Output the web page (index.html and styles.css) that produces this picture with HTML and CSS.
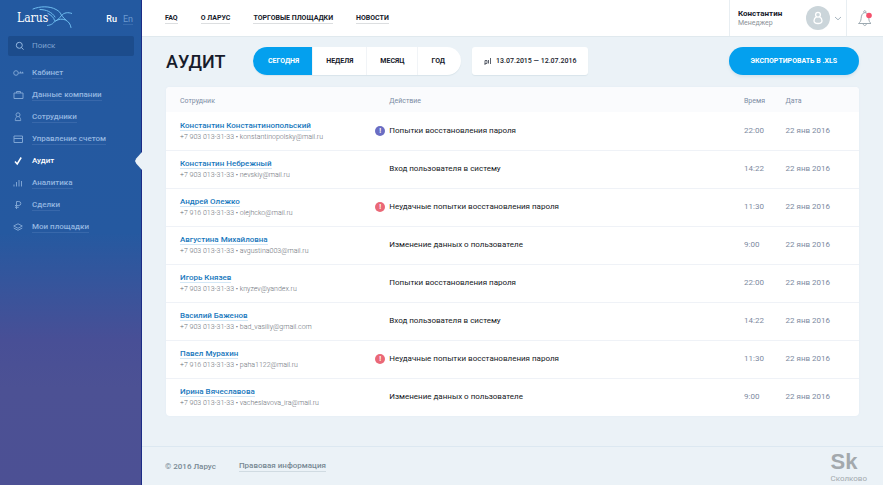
FILE: index.html
```html
<!DOCTYPE html>
<html lang="ru">
<head>
<meta charset="utf-8">
<meta name="viewport" content="width=device-width, initial-scale=1">
<title>Ларус — Аудит</title>
<link rel="stylesheet" href="styles.css">
</head>
<body>
<div class="app">
  <aside class="sidebar">
    <div class="brand">
      <a class="logo" href="#">
        <span class="logo-text">Larus</span>
        <svg class="logo-bird" viewBox="0 0 40 22" fill="none" stroke="#6fbdf0" stroke-linecap="round" stroke-linejoin="round" aria-hidden="true">
          <path d="M1 3C8 0 18 0 24 3.500c3 1.500 5 3.500 5.500 6"/>
          <path d="M8 3.500c6 0 12 2.500 15 7.500"/>
          <path d="M40 7.500c-4-1.500-8-1-10.500 2-2 2.500-3.500 4.500-6 5.500"/>
          <path d="M16 7.500c3 1.500 6 4 6.500 7 0 2.500-3 4.500-7 5"/>
          <path d="M23.500 15c3-2 7-2.500 10-1 3 1.500 5 4 5.500 7.500M30 9.500c1 2 2.500 3.500 4 4.500"/>
        </svg>
      </a>
      <div class="langs"><a class="lang active" href="#">Ru</a><a class="lang" href="#">En</a></div>
    </div>
    <form class="search">
      <svg class="search-icon" viewBox="0 0 10 10" fill="none" stroke="currentColor" aria-hidden="true"><circle cx="4.3" cy="4.3" r="3"/><path d="M6.5 6.5 8.5 8.7"/></svg>
      <input type="search" placeholder="Поиск" aria-label="Поиск">
    </form>
    <nav class="menu" aria-label="Разделы">
      <a href="#"><svg viewBox="0 0 12 12"><circle cx="4" cy="6" r="2.3"/><path d="M6.500 6h5M8.500 6V4.500M10.500 6V4.800"/></svg><span>Кабинет</span></a>
      <a href="#"><svg viewBox="0 0 12 12"><path d="M2 4h9v5.500H2zM4.500 4V2.500h4V4"/></svg><span>Данные компании</span></a>
      <a href="#"><svg viewBox="0 0 12 12"><circle cx="6" cy="3.800" r="2"/><path d="M4.800 5.800C3.600 6.600 3.300 8 3.300 9.600h5.400c0-1.600-.3-3-1.500-3.800"/></svg><span>Сотрудники</span></a>
      <a href="#"><svg viewBox="0 0 12 12"><path d="M2 3h8.500v6.500H2zM2 5.500h8.500"/></svg><span>Управление счетом</span></a>
      <a class="current" href="#" aria-current="page"><svg viewBox="0 0 12 12"><path d="M3 6.500 5.200 9l4-6.500"/></svg><span>Аудит</span></a>
      <a href="#"><svg viewBox="0 0 12 12"><path d="M2 9.500V7.500M4.500 9.500V5M7 9.500V3M9.500 9.500V4"/></svg><span>Аналитика</span></a>
      <a href="#"><svg viewBox="0 0 12 12"><path d="M4.500 10V2.500h2.300a2 2 0 0 1 0 4H3M3 8.300h3.800"/></svg><span>Сделки</span></a>
      <a href="#"><svg viewBox="0 0 12 12"><path d="M6 2.800 10.300 5 6 7.300 1.700 5zM1.700 7 6 9.300 10.300 7"/></svg><span>Мои площадки</span></a>
    </nav>
  </aside>

  <div class="page">
    <header class="topbar">
      <nav class="links" aria-label="Сайт">
        <a href="#">FAQ</a><a href="#">О Ларус</a><a href="#">Торговые площадки</a><a href="#">Новости</a>
      </nav>
      <button class="user" type="button">
        <span class="user-text"><b>Константин</b><small>Менеджер</small></span>
        <svg class="avatar" viewBox="0 0 24 24" aria-hidden="true"><circle cx="12" cy="12" r="12" fill="#cbd5da"/><g fill="none" stroke="#fff" stroke-width="1.300"><circle cx="12" cy="8.800" r="2.400"/><path d="M10.500 10.800c-2 1-2.500 2.200-2.500 3.900 0 1.800 1.500 2.800 4 2.800s4-1 4-2.800c0-1.700-.5-2.900-2.500-3.900"/></g></svg>
        <svg class="chevron" viewBox="0 0 8 8" fill="none" stroke="#a7b5bf" aria-hidden="true"><path d="M1 3 4 5.800 7 3"/></svg>
      </button>
      <button class="bell" type="button" aria-label="Уведомления">
        <svg viewBox="0 0 16 18" fill="none" stroke="#9daab2" aria-hidden="true"><path d="M1.500 14.500h12.500c-1.500-1.200-2-2.500-2.200-5C11.500 6 10.500 4 8 3.500 5.500 4 4.300 6 4.100 9.500c-.2 2.500-1 3.800-2.600 5zM6.300 14.800c0 2.300 3 2.300 3 0M6.800 3.500c-.8-2.500 2.600-2.500 2 0"/><circle cx="12" cy="6.500" r="2.800" fill="#f4516c" stroke="none"/></svg>
      </button>
    </header>

    <main class="content">
      <div class="toolbar">
        <h1>Аудит</h1>
        <div class="periods" role="group" aria-label="Период">
          <button class="selected" type="button" aria-pressed="true">Сегодня</button><button type="button">Неделя</button><button type="button">Месяц</button><button type="button">Год</button>
        </div>
        <button class="dates" type="button">
          <svg viewBox="0 0 8 8" fill="none" stroke="#5c626d" aria-hidden="true"><path d="M1 3.500h2v3H1zM1 6v2M4.500 6.500V3M6.500 7V1M4 3.500h1"/></svg>
          <span>13.07.2015 — 12.07.2016</span>
        </button>
        <button class="export" type="button">Экспортировать в .xls</button>
      </div>

      <table class="audit">
        <colgroup><col class="col-person"><col class="col-action"><col class="col-time"><col class="col-date"></colgroup>
        <thead><tr><th scope="col">Сотрудник</th><th scope="col">Действие</th><th scope="col">Время</th><th scope="col">Дата</th></tr></thead>
        <tbody>
          <tr><td><a href="#">Константин Константинопольский</a><small>+7 903 013-31-33 • konstantinopolsky@mail.ru</small></td><td><span class="action notice">Попытки восстановления пароля</span></td><td>22:00</td><td>22 янв 2016</td></tr>
          <tr><td><a href="#">Константин Небрежный</a><small>+7 903 013-31-33 • nevskiy@mail.ru</small></td><td><span class="action">Вход пользователя в систему</span></td><td>14:22</td><td>22 янв 2016</td></tr>
          <tr><td><a href="#">Андрей Олежко</a><small>+7 916 013-31-33 • olejhcko@mail.ru</small></td><td><span class="action alert">Неудачные попытки восстановления пароля</span></td><td>11:30</td><td>22 янв 2016</td></tr>
          <tr><td><a href="#">Августина Михайловна</a><small>+7 903 013-31-33 • avgustina003@mail.ru</small></td><td><span class="action">Изменение данных о пользователе</span></td><td>9:00</td><td>22 янв 2016</td></tr>
          <tr><td><a href="#">Игорь Князев</a><small>+7 903 013-31-33 • knyzev@yandex.ru</small></td><td><span class="action">Попытки восстановления пароля</span></td><td>22:00</td><td>22 янв 2016</td></tr>
          <tr><td><a href="#">Василий Баженов</a><small>+7 903 013-31-33 • bad_vasiliy@gmail.com</small></td><td><span class="action">Вход пользователя в систему</span></td><td>14:22</td><td>22 янв 2016</td></tr>
          <tr><td><a href="#">Павел Мурахин</a><small>+7 916 013-31-33 • paha1122@mail.ru</small></td><td><span class="action alert">Неудачные попытки восстановления пароля</span></td><td>11:30</td><td>22 янв 2016</td></tr>
          <tr><td><a href="#">Ирина Вячеславова</a><small>+7 903 013-31-33 • vacheslavova_ira@mail.ru</small></td><td><span class="action">Изменение данных о пользователе</span></td><td>9:00</td><td>22 янв 2016</td></tr>
        </tbody>
      </table>
    </main>

    <footer class="footer">
      <span>© 2016 Ларус</span>
      <a href="#">Правовая информация</a>
      <div class="partner"><b>Sk</b><span>Сколково</span></div>
    </footer>
  </div>
</div>
</body>
</html>
```
FILE: styles.css
```css
* { box-sizing: border-box; }

body {
  margin: 0;
  font: 8px/12px Roboto, "Liberation Sans", sans-serif;
  color: #171b2b;
  background: #ebf2f7;
}

a { color: inherit; text-decoration: none; }
button { font: inherit; color: inherit; text-transform: inherit; border: 0; padding: 0; background: none; cursor: pointer; }

.app { display: flex; min-height: 100vh; }

/* Sidebar */
.sidebar {
  flex: none;
  width: 142px;
  border-right: 1px solid #1c2c86;
  background: linear-gradient(#2359a0 0%, #2559a0 48%, #35559c 58%, #484f96 70%, #4c5194 80%, #4c5094 100%);
  color: #94b7e0;
}

.brand { display: flex; justify-content: space-between; height: 36px; padding: 6px 8px 0 17px; }
.logo { display: flex; color: #fff; }
.logo-text { font: 12px/24px "DejaVu Serif Condensed", "DejaVu Serif", serif; }
.logo-bird { width: 40px; height: 22px; margin-left: -16px; }
.langs { display: flex; gap: 6px; font-size: 9px; line-height: 12px; padding-top: 7px; }
.lang { height: 12px; border-bottom: 1px solid #386bad; color: #6c9ad0; }
.lang.active { color: #fff; font-weight: 500; border-color: transparent; }

.search { display: flex; align-items: center; gap: 7px; height: 20px; margin: 0 7px 0 8px; padding: 0 7px; border-radius: 2px; background: #1c4c8c; }
.search-icon { flex: none; width: 10px; height: 10px; }
.search input { min-width: 0; width: 100%; padding: 0; border: 0; outline: 0; background: none; font: inherit; color: #fff; }
.search input::placeholder { color: #7fa4d1; opacity: 1; }

.menu { margin-top: 6px; font-weight: 500; line-height: 11px; }
.menu a { display: flex; align-items: center; gap: 8px; height: 22px; padding-left: 12px; position: relative; }
.menu span { border-bottom: 1px solid #3868ab; }
.menu svg { width: 12px; height: 12px; fill: none; stroke: currentColor; opacity: .8; }
.menu .current { color: #fff; }
.menu .current span { border-color: transparent; }
.menu .current svg { opacity: 1; stroke-width: 1.5; }
.menu .current::after {
  content: "";
  position: absolute;
  top: 2px;
  right: -1px;
  width: 7px;
  height: 18px;
  background: #ebf2f7;
  clip-path: polygon(100% 0, 20% 35%, 0 50%, 20% 65%, 100% 100%);
}

/* Top bar */
.page { flex: 1; min-width: 0; display: flex; flex-direction: column; }
.topbar { display: flex; height: 36px; background: #fff; box-shadow: 0 1px 0 #e0e9ee; }
.links { display: flex; align-items: center; gap: 23px; flex: 1; padding-left: 23px; font-size: 7px; line-height: 10px; font-weight: 700; text-transform: uppercase; }
.links a { border-bottom: 1px solid #dcdee0; }
.user { display: flex; align-items: center; width: 117px; padding-left: 8px; border-left: 1px solid #e8eef2; text-align: left; }
.user-text { flex: 1; }
.user b, .user small { display: block; }
.user b { font-size: 8px; line-height: 10px; }
.user small { font-size: 7px; line-height: 8px; color: #8c9298; }
.avatar { width: 24px; height: 24px; }
.chevron { width: 8px; height: 8px; margin: 0 4px; }
.bell { display: flex; align-items: center; justify-content: center; width: 37px; border-left: 1px solid #e8eef2; }
.bell svg { width: 16px; height: 18px; }

/* Toolbar */
.content { flex: 1; padding: 11px 24px 30px; }
.toolbar { display: flex; align-items: center; height: 28px; margin-bottom: 12px; font-size: 7px; font-weight: 700; }
h1 { width: 87px; margin: 0; padding-top: 2px; font-size: 18px; line-height: 28px; font-weight: 500; text-transform: uppercase; }
.periods { display: flex; height: 28px; border-radius: 14px; overflow: hidden; background: #fff; box-shadow: 0 1px 1px #d9e4ea; text-transform: uppercase; }
.periods button { padding: 0 13px; border-left: 1px solid #f1f4f7; }
.periods .selected { padding: 0 13px 0 15px; background: #04a0ee; border: 0; color: #fff; }
.periods button:last-child { padding-right: 16px; }
.dates { display: flex; align-items: center; gap: 4px; height: 28px; margin-left: 11px; padding: 0 12px; border-radius: 3px; background: #fff; box-shadow: 0 1px 1px #d9e4ea; font-weight: 500; }
.dates svg { width: 8px; height: 8px; }
.export { height: 28px; margin-left: auto; padding: 0 22px; border-radius: 14px; background: #04a0ee; box-shadow: 0 2px 3px #d5e4ed; color: #fff; text-transform: uppercase; }

/* Audit table */
.audit { width: 100%; table-layout: fixed; border-collapse: separate; border-spacing: 0; border-radius: 4px; overflow: hidden; background: #fff; box-shadow: 0 0 2px #dfeaf1; }
.col-person { width: 30.2%; }
.col-action { width: 53.2%; }
.col-time { width: 6%; }
.col-date { width: 10.6%; }
.audit th { height: 25px; padding: 3px 0 0; background: #fafbfd; font-size: 7px; line-height: 10px; font-weight: 400; text-align: left; color: #7c8ca4; }
.audit td { height: 38px; padding: 0 0 1px; border-top: 1px solid #eff2f7; font-size: 8px; color: #7d8a9f; }
.audit tbody tr:first-child td { border-top-color: transparent; }
.audit th:first-child, .audit td:first-child { padding-left: 14px; }
.audit th:nth-child(2) { padding-left: 14px; }
.audit td a { border-bottom: 1px solid #d4e8f6; color: #1878bd; font-weight: 500; }
.audit small { display: block; font-size: 7px; line-height: 10px; font-weight: 300; color: #6c7179; }
.action { display: flex; align-items: center; gap: 4px; color: #15171c; }
.action::before { content: ""; width: 10px; height: 10px; border-radius: 50%; font-size: 7px; line-height: 10px; font-weight: 700; text-align: center; color: #fff; }
.notice::before { content: "!"; background: #6a6dc3; }
.alert::before { content: "!"; background: #ea6877; }

/* Footer */
.footer { display: flex; align-items: center; gap: 23px; height: 39px; padding: 0 16px 0 23px; border-top: 1px solid #dce8f1; font-size: 8px; font-weight: 500; line-height: 11px; color: #788994; }
.footer a { border-bottom: 1px solid #d0dbe2; }
.partner { margin-left: auto; color: #a3a9ad; }
.partner b { display: block; font: 700 22px/25px "Liberation Sans", sans-serif; }
.partner span { display: block; font-size: 8px; line-height: 9px; font-weight: 400; }
```
